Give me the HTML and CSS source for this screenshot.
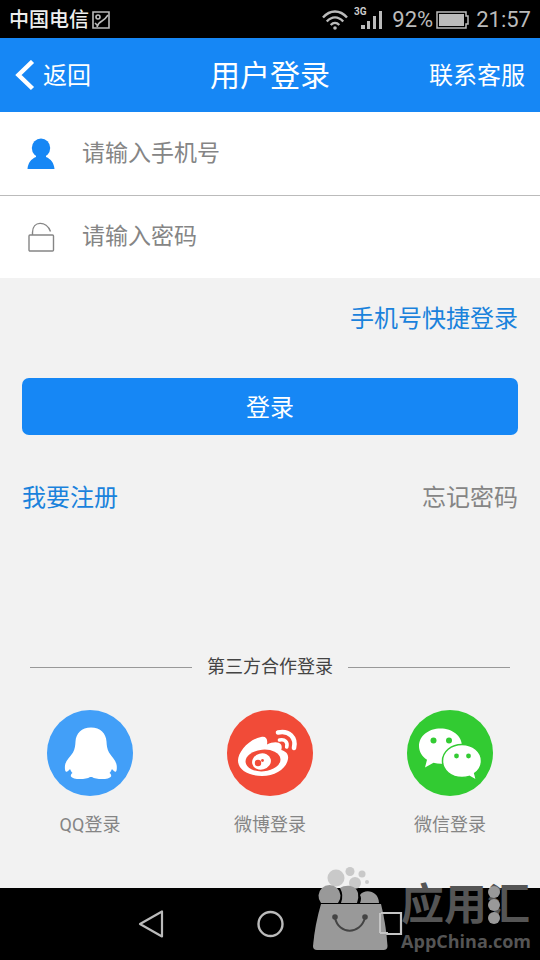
FILE: index.html
```html
<!DOCTYPE html>
<html lang="zh-CN">
<head>
<meta charset="utf-8">
<meta name="viewport" content="width=device-width, initial-scale=1">
<title>用户登录</title>
<link rel="stylesheet" href="styles.css">
</head>
<body>
<div class="status">
  <span class="carrier">中国电信</span>
  <svg class="shot" width="18" height="18" viewBox="0 0 18 18" fill="none" stroke="#bbb" stroke-width="1.6"><path d="M1 1h16v16H1z"/><circle cx="6" cy="6" r="2"/><path d="M5 16c1-4 3-5 5-6s4-3 6-6M3 12l3 3"/></svg>
  <div class="status-right">
    <svg class="wifi" width="26" height="20" viewBox="0 0 26 20" fill="none" stroke="#bbb" stroke-width="2.4"><path d="M1 7.500C8-.5 18-.5 25 7.500M4.800 11.500c5-5.500 11.400-5.500 16.400 0M8.700 15c2.700-2.800 5.900-2.800 8.600 0"/><circle cx="13" cy="18" r="1.800" fill="#bbb" stroke="none"/></svg>
    <svg class="signal" width="30" height="24" viewBox="0 0 30 24"><text x="0" y="9" class="net">3G</text><path fill="#bbb" d="M7 19h4v4H7zM13 15h3v8h-3zM19 10h3v13h-3zM25 5h3v18h-3z"/></svg>
    <span class="percent">92%</span>
    <svg class="battery" width="34" height="18" viewBox="0 0 34 18"><path d="M1 1h29v4h2v8h-2v4H1z" fill="none" stroke="#bbb" stroke-width="1.500"/><path d="M3 3h25v12H3z" fill="#bbb"/></svg>
    <time>21:57</time>
  </div>
</div>
<header class="bar">
  <a class="back" href="#"><svg width="20" height="32" viewBox="0 0 20 32" fill="none" stroke="#fff" stroke-width="4.500"><path d="M17.500 1.500L3.500 15l14 13.500"/></svg>返回</a>
  <h1>用户登录</h1>
  <a class="service" href="#">联系客服</a>
</header>
<main>
  <form>
    <div class="fields">
      <div class="field">
        <label for="phone" aria-label="手机号"><svg width="28" height="32" viewBox="0 0 28 32" fill="#1687f5"><ellipse cx="14" cy="10" rx="9.200" ry="9.500"/><path d="M9 17h10v2c5 2 8 6 8.500 12H.5C1 25 4 21 9 19z"/></svg></label>
        <input id="phone" type="tel" placeholder="请输入手机号">
      </div>
      <div class="field">
        <label for="password" aria-label="密码"><svg width="28" height="32" viewBox="0 0 28 32" fill="none" stroke="#858585" stroke-width="1.400"><rect x="2" y="14" width="24.500" height="16" rx="1"/><path d="M5.500 14v-2.500c0-12 14-12 18-1"/></svg></label>
        <input id="password" type="password" placeholder="请输入密码">
      </div>
    </div>
    <div class="quick"><a href="#">手机号快捷登录</a></div>
    <button class="submit" type="submit">登录</button>
    <div class="links"><a href="#">我要注册</a><a class="muted" href="#">忘记密码</a></div>
  </form>
  <section class="partners">
    <h2>第三方合作登录</h2>
    <div class="providers">
      <a href="#"><svg width="86" height="86" viewBox="0 0 86 86"><circle cx="43" cy="43" r="43" fill="#429ff8"/><path fill="#fff" d="M44 17.500c-9.500 0-15 6-15.500 14-.2 4-.5 7-2.500 11-3 4.500-7.500 8-8 13-.3 2.500 0 5 .8 6 1.200.8 3-1 4.200-2.500.6 1.500 1.500 3 2.500 4-1.500 1-2 2.500-1.500 3.500 1.500 3.300 15 3.300 19 .5h2c4 2.800 17.500 2.800 19-.5.500-1 0-2.500-1.500-3.500 1-1 1.900-2.500 2.500-4 1.200 1.500 3 3.300 4 2.500.8-1 1-3.500.7-6-.6-5-4.700-8.500-7.700-13-2-4-2.300-7-2.500-11-.5-8-6-14-15.500-14z"/></svg><span>QQ登录</span></a>
      <a href="#"><svg width="86" height="86" viewBox="0 0 86 86"><circle cx="43" cy="43" r="43" fill="#f14b38"/><path fill="#fff" d="M34 27c5-1.200 7 2 6 7.500 5-2.500 11.500-3.500 14 0 1 1.700.8 3.500.3 5.500 5 1.500 7.500 4.500 6.700 9-1.500 9.500-12.500 17-26 17-13 0-24-6-24-15.500C11 42 22 29 34 27z"/><ellipse cx="36" cy="50.500" rx="17.500" ry="10.800" transform="rotate(-5 36 50.500)" fill="#f14b38"/><ellipse cx="34.500" cy="51.500" rx="9.500" ry="8" transform="rotate(-15 34.500 51.500)" fill="#fff"/><circle cx="31" cy="53" r="3.200" fill="#f14b38"/><circle cx="35.500" cy="50.500" r="1.400" fill="#f14b38"/><g fill="none" stroke="#fff" stroke-linecap="round"><path stroke-width="4.600" d="M51 22.500c11-2.500 18.500 5 16 15.500"/><path stroke-width="3.600" d="M52.500 30c5.500-1.300 8.500 2.200 7.200 7"/></g></svg><span>微博登录</span></a>
      <a href="#"><svg width="86" height="86" viewBox="0 0 86 86"><circle cx="43" cy="43" r="43" fill="#32cb32"/><path fill="#fff" d="M33.500 18.500C21.500 18.500 12 26 12 36c0 5.500 3 10.500 8 13.800L18 57.500l8.500-4.800c8 2.300 17 .8 22.500-4 4-3.400 6-7.700 6-12.700 0-10-9.500-17.500-21.500-17.500z"/><path fill="#fff" stroke="#32cb32" stroke-width="1.500" d="M55 34.500c-11 0-19.500 7.300-19.500 16.500S44 67.500 55 67.500c2.500 0 5-.4 7.200-1.100l7.300 4-1.800-7c4.300-3 6.800-7.300 6.800-12.400 0-9.200-8.500-16.500-19.500-16.500z"/><g fill="#32cb32"><circle cx="26.500" cy="30.500" r="3"/><circle cx="42" cy="30.500" r="3"/><circle cx="49.500" cy="46" r="2.400"/><circle cx="61.500" cy="46" r="2.400"/></g></svg><span>微信登录</span></a>
    </div>
  </section>
</main>
<nav class="system">
  <button aria-label="后退"><svg width="28" height="30" viewBox="0 0 28 30" fill="none" stroke="#bbb" stroke-width="2.200" stroke-linejoin="round"><path d="M26 2.500v25L4 15z"/></svg></button>
  <button aria-label="主屏幕"><svg width="28" height="30" viewBox="0 0 28 30" fill="none" stroke="#bbb" stroke-width="2.400"><circle cx="14.500" cy="15" r="12"/></svg></button>
  <button aria-label="最近任务"><svg width="28" height="30" viewBox="0 0 28 30" fill="none" stroke="#c4c4c4" stroke-width="2.200"><path d="M4 4h21v21H4z"/></svg></button>
</nav>
<aside class="mark">
  <svg class="bag" width="76" height="84" viewBox="0 0 76 84"><g fill="#bbb" fill-opacity=".75"><circle cx="23" cy="11" r="8.500"/><circle cx="37" cy="4.500" r="4.500"/><circle cx="49" cy="7" r="3.500"/><circle cx="54" cy="15" r="2"/><circle cx="42" cy="16" r="6"/></g><g fill="#999"><path d="M8 36a11 11 0 1 1 17 0z"/><path d="M28 36q3-8-1-15c6-4 16-3 18 5q1 5-1 10z"/><path d="M47 36q2-5 0-8c5-7 19-4 19 8z"/></g><path fill="#999" d="M8 37h60q5 20 6.500 42 0 4-4 4H4q-4 0-4-4Q2 57 8 37z"/><g fill="none" stroke="#444" stroke-width="2"><path d="M22 51c4 17 25 17 30 0"/></g><circle cx="22" cy="50" r="2.800" fill="#444"/><circle cx="52" cy="50" r="2.800" fill="#444"/><path d="M68 46h6M67 66h8M67 46v20" fill="none" stroke="#c4c4c4" stroke-width="2"/></svg>
  <div class="brand"><span class="name">应用汇</span><svg class="dots" width="14" height="40" viewBox="0 0 14 40" fill="#999"><circle cx="7" cy="7" r="6"/><circle cx="7" cy="20" r="6"/><circle cx="7" cy="33" r="6"/></svg><span class="domain">AppChina.com</span></div>
</aside>
</body>
</html>
```
FILE: styles.css
```css
* { box-sizing: border-box; }
body {
  margin: 0;
  min-height: 100vh;
  display: flex;
  flex-direction: column;
  position: relative;
  background: #f2f2f2;
  font-family: Roboto, "Noto Sans CJK SC", sans-serif;
  font-size: 24px;
  line-height: 36px;
}
a { color: #1a82dc; text-decoration: none; }
svg { display: block; flex: none; }
h1, h2 { margin: 0; font-weight: 400; }

.status {
  height: 38px;
  padding: 2px 9px 0;
  display: flex;
  align-items: center;
  background: #000;
  color: #bbb;
  font-size: 22px;
}
.carrier { color: #eee; font-size: 20px; font-weight: 500; }
.shot { margin-left: 3px; }
.status-right { margin-left: auto; display: flex; align-items: center; gap: 4px; }
.net { font-size: 10px; font-weight: 700; fill: #ccc; }
.signal { margin: 0 4px 4px 2px; }
.percent { margin-right: -1px; }
.battery { margin-right: 2px; }

.bar {
  height: 74px;
  padding: 2px 15px 0;
  display: grid;
  grid-template-columns: 1fr auto 1fr;
  align-items: center;
  background: #1687f5;
  color: #fff;
}
.bar a { color: #fff; }
.bar h1 { font-size: 30px; }
.back { display: flex; align-items: center; gap: 8px; }
.service { justify-self: end; }

.fields { background: #fff; }
.field { height: 83px; padding-left: 27px; display: flex; align-items: center; gap: 27px; }
.field + .field { border-top: 1px solid #bbb; }
.field input {
  flex: 1;
  min-width: 0;
  padding: 0;
  border: 0;
  outline: 0;
  background: none;
  font: inherit;
  font-size: 23px;
  line-height: 36px;
  color: #333;
}
.field input::placeholder { color: #858585; opacity: 1; }

main { flex: 1; }
.quick { padding: 23px 22px 41px; text-align: right; }
.submit {
  display: block;
  width: calc(100% - 44px);
  height: 57px;
  margin: 0 22px;
  padding: 2px 0 0;
  border: 0;
  border-radius: 7px;
  background: #1687f5;
  color: #fff;
  font: inherit;
}
.links { padding: 45px 22px 0; display: flex; justify-content: space-between; }
.links .muted { color: #858585; }

.partners { padding-top: 133px; }
.partners h2 {
  margin: 0 30px;
  display: flex;
  align-items: center;
  gap: 15px;
  font-size: 18px;
  color: #444;
}
.partners h2::before, .partners h2::after { content: ""; flex: 1; height: 1px; background: #999; }
.providers { margin-top: 25px; padding-bottom: 45px; display: grid; grid-template-columns: repeat(3, 1fr); }
.providers a {
  display: flex;
  flex-direction: column;
  align-items: center;
  gap: 11px;
  font-size: 18px;
  color: #858585;
}

.system { height: 72px; display: flex; justify-content: center; gap: 92px; align-items: center; background: #000; }
.system button { padding: 0; border: 0; background: none; }

.mark { position: absolute; right: 9px; bottom: 9px; display: flex; align-items: flex-end; gap: 12px; pointer-events: none; }
.brand { position: relative; display: flex; flex-direction: column; color: #555; }
.name { font-size: 43px; line-height: 44px; font-weight: 700; margin-bottom: 4px; }
.dots { position: absolute; left: 86px; top: 2px; }
.domain { font: 700 18px/20px "Open Sans", sans-serif; }
```
